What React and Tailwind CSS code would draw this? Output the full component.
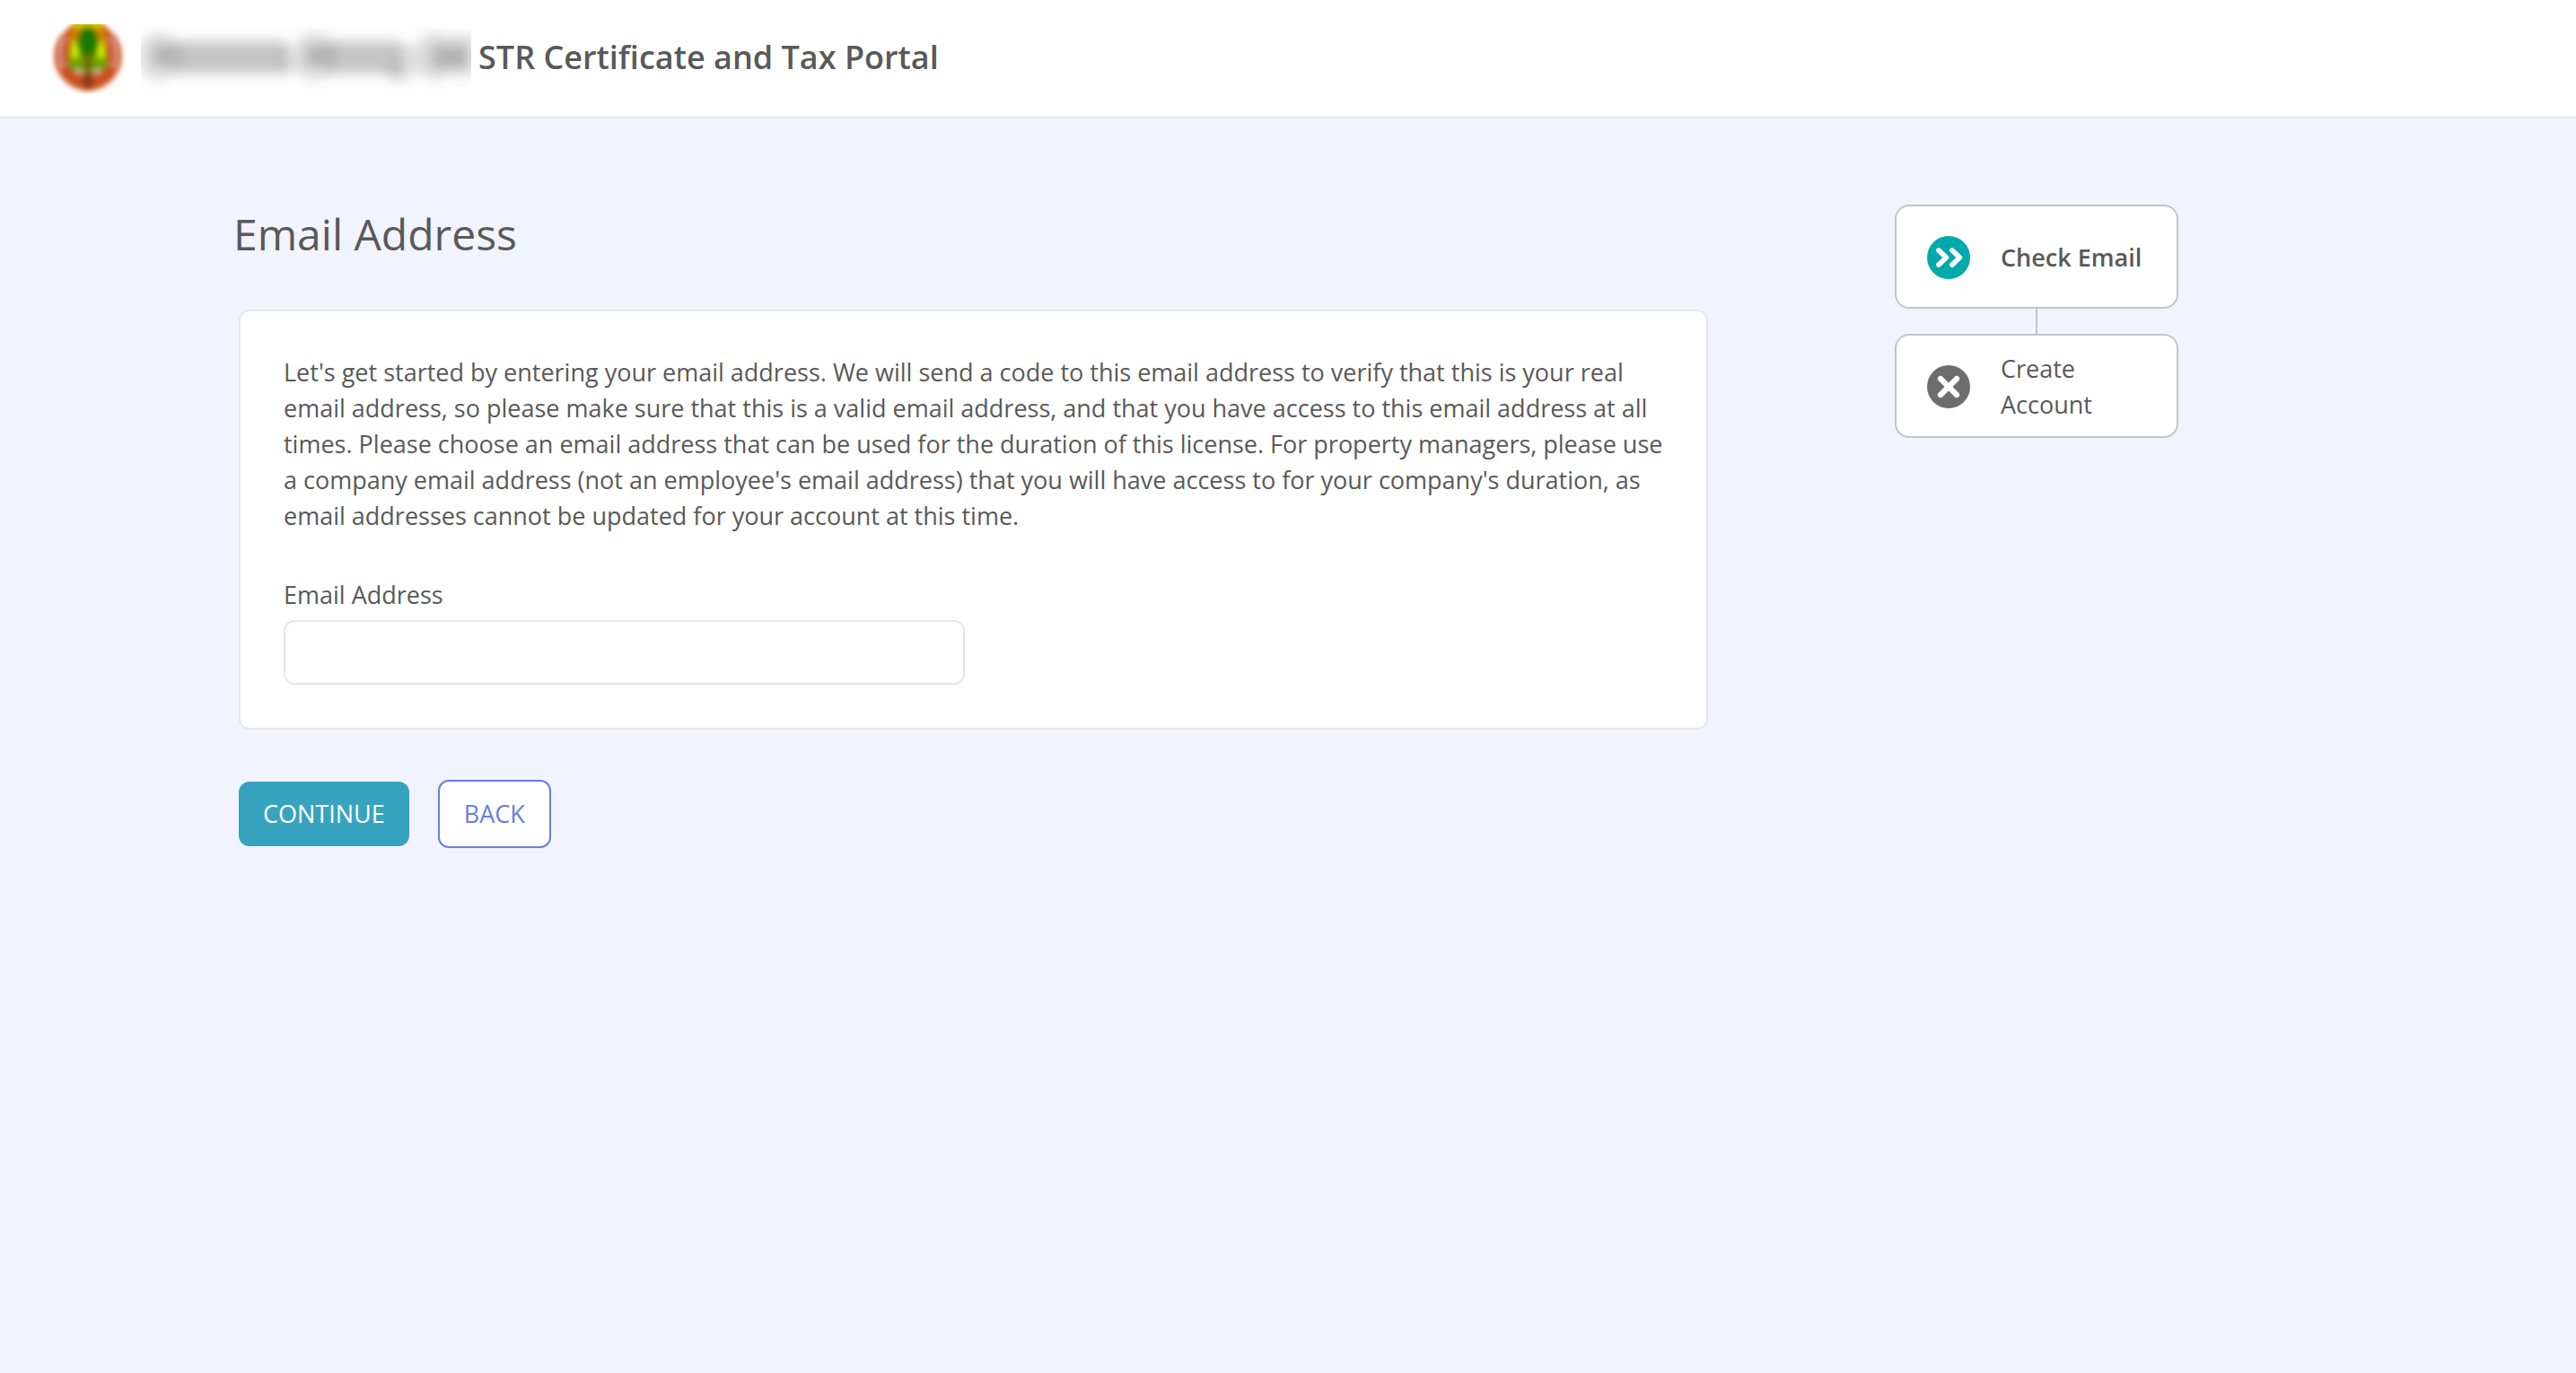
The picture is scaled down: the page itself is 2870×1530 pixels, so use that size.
import React from 'react'

const steps = [
  { label: 'Check Email', active: true },
  { label: 'Create Account', active: false },
]

const Seal = () => (
  <svg className='h-[77px] w-[85px] shrink-0' viewBox='0 0 85 77' aria-hidden='true'>
    <defs>
      <filter id='sealEdge' x='-20%' y='-20%' width='140%' height='140%'>
        <feGaussianBlur stdDeviation='3' />
      </filter>
      <filter id='sealSoft' x='-50%' y='-50%' width='200%' height='200%'>
        <feGaussianBlur stdDeviation='3' />
      </filter>
    </defs>
    <ellipse cx='42' cy='36' rx='37' ry='38' fill='#c9501f' filter='url(#sealEdge)' />
    <g filter='url(#sealSoft)'>
      <path d='M15 14 Q7 32 13 50' fill='none' stroke='#d98f80' strokeWidth='7' />
      <path d='M69 14 Q77 32 71 50' fill='none' stroke='#d98f80' strokeWidth='7' />
      <path d='M20 20 Q20 -4 42 -6 Q64 -4 64 20 L60 28 L24 28 Z' fill='#d08000' />
      <rect x='26' y='-8' width='32' height='12' fill='#dcc800' />
      <ellipse cx='42' cy='34' rx='21' ry='20' fill='#6f9c00' />
      <ellipse cx='27' cy='32' rx='5' ry='13' fill='#c8e800' />
      <ellipse cx='57' cy='32' rx='5' ry='13' fill='#c8e800' />
      <ellipse cx='42' cy='20' rx='12' ry='18' fill='#1a7a00' />
      <rect x='37' y='34' width='10' height='18' fill='#6c7000' />
      <ellipse cx='28' cy='44' rx='9' ry='7' fill='#74a400' />
      <ellipse cx='56' cy='44' rx='9' ry='7' fill='#74a400' />
      <path d='M27 54 L36 53 M48 53 L57 54' stroke='#e0c8a8' strokeWidth='4' />
      <rect x='37' y='54' width='10' height='16' fill='#8a3a1c' />
    </g>
  </svg>
)

// smudged county name
const HiddenName = () => (
  <svg className='h-[68px] w-[368px] shrink-0' viewBox='0 0 368 68' aria-hidden='true'>
    <defs>
      <filter id='smudge' x='-10%' y='-50%' width='120%' height='200%'>
        <feGaussianBlur stdDeviation='7' />
      </filter>
    </defs>
    <g filter='url(#smudge)' fill='#5c5c5c'>
      <g opacity='0.2'>
        <ellipse cx='20' cy='32' rx='24' ry='27' />
        <ellipse cx='193' cy='32' rx='24' ry='27' />
        <ellipse cx='328' cy='32' rx='24' ry='27' />
        <rect x='344' y='8' width='28' height='46' />
        <rect x='276' y='38' width='24' height='22' />
        <rect x='155' y='20' width='20' height='30' />
        <rect x='286' y='20' width='22' height='30' />
      </g>
      <g opacity='0.35'>
        <rect x='14' y='20' width='22' height='22' />
        <rect x='36' y='15' width='125' height='36' />
        <rect x='184' y='20' width='22' height='22' />
        <rect x='206' y='15' width='84' height='36' />
        <rect x='324' y='20' width='40' height='24' />
      </g>
    </g>
  </svg>
)

const StepIcon = ({ active }) => (
  <svg className='size-12 shrink-0' viewBox='0 0 48 48' fill='none' stroke='#fff' strokeLinecap='round' strokeLinejoin='round' aria-hidden='true'>
    <circle cx='24' cy='24' r='24' fill={active ? '#00a9ab' : '#6d6d6d'} stroke='none' />
    {active ? (
      <path d='M13 16l8.3 8-8.3 8M28 16l8.3 8-8.3 8' strokeWidth='5.8' />
    ) : (
      <path d='M15 15l18 18M33 15l-18 18' strokeWidth='6.2' />
    )}
  </svg>
)

const App = () => {
  return (
    <div className="min-h-screen w-full bg-[#f1f3ff] font-['Open_Sans',sans-serif] text-[27px] leading-10 text-[#595959]">
      {/* Header */}
      <header className='flex h-[132px] items-center border-b-2 border-gray-200 bg-white pl-14'>
        <Seal />
        <div className='ml-4 flex items-center gap-2'>
          <HiddenName />
          <h1 className='pb-0.5 text-4xl font-semibold'>STR Certificate and Tax Portal</h1>
        </div>
      </header>

      <main className='grid grid-cols-[7fr_3fr] px-[260px] pt-24'>
        {/* Email form */}
        <form onSubmit={(e) => e.preventDefault()}>
          <h2 className='text-5xl leading-[66px]'>Email Address</h2>
          <div className='mt-[51px] mr-0.5 ml-1.5 rounded-xl border-2 border-gray-200 bg-white p-12'>
            <p>
              Let's get started by entering your email address. We will send a code to this email address to verify that this is your real email address, so please make sure that this is a valid email address, and that you have access to this email address at all times. Please choose an email address that can be used for the duration of this license. For property managers, please use a company email address (not an employee's email address) that you will have access to for your company's duration, as email addresses cannot be updated for your account at this time.
            </p>
            <div className='mt-12 grid grid-cols-2 gap-5'>
              <div>
                <label htmlFor='email' className='block'>Email Address</label>
                <input id='email' type='email' className='mt-2 block h-[72px] w-full rounded-xl border-2 border-gray-200 bg-white px-6 outline-none' />
              </div>
            </div>
          </div>
          <div className='mt-14 ml-1.5 flex items-center gap-8'>
            <button type='submit' className='rounded-xl bg-[#38a3be] px-[27px] py-4 text-white'>CONTINUE</button>
            <button type='button' className='rounded-xl border-2 border-[#667fe3] bg-white px-[27px] py-4 text-[#667fe3]'>BACK</button>
          </div>
        </form>

        {/* Progress steps */}
        <aside className='flex flex-col items-center pl-[23px]'>
          {steps.map((step, i) => (
            <React.Fragment key={step.label}>
              {i > 0 && <div className='h-7 w-0.5 bg-[#c4c4c4]'></div>}
              <div className='flex h-[116px] w-[316px] items-center gap-[34px] rounded-2xl border-2 border-[#c4c4c4] bg-white pt-0.5 pr-6 pl-[34px]'>
                <StepIcon active={step.active} />
                <span className={step.active ? 'font-semibold' : ''}>{step.label}</span>
              </div>
            </React.Fragment>
          ))}
        </aside>
      </main>
    </div>
  )
}

export default App
